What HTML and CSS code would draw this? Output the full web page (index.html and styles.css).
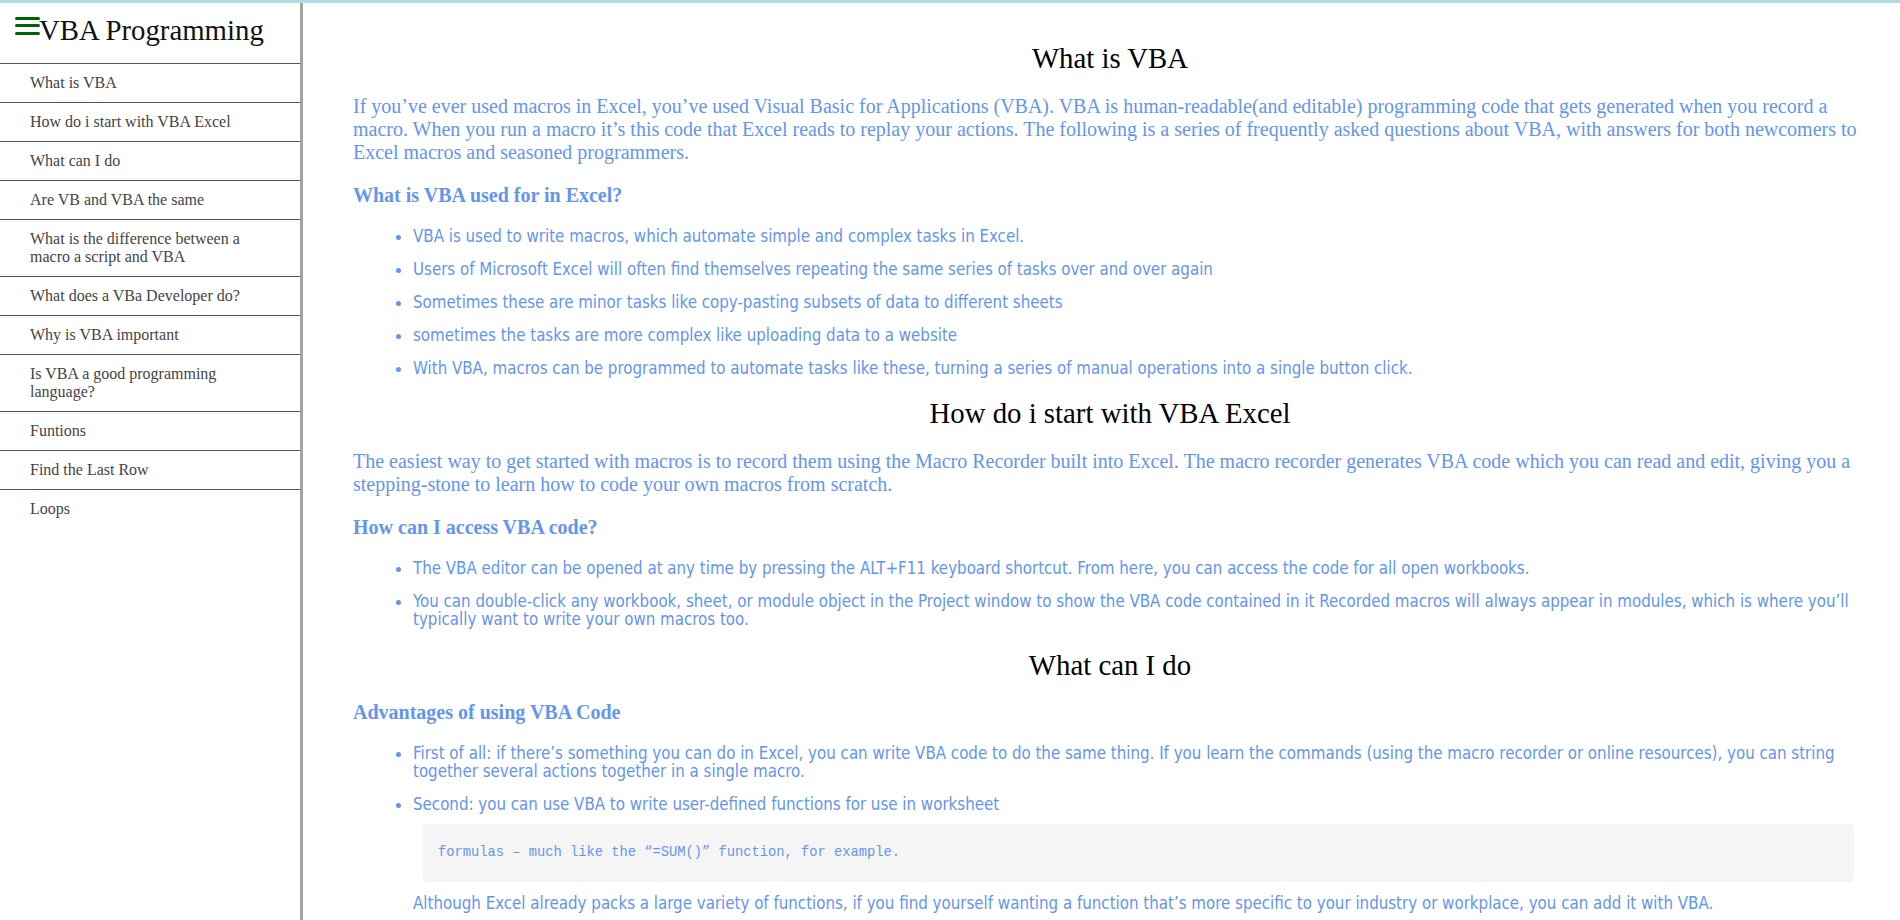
FILE: index.html
```html
<!DOCTYPE html>
<html lang="en">
<head>
<meta charset="utf-8">
<title>VBA Programming</title>
<link rel="stylesheet" href="styles.css">
</head>
<body>
<div class="layout">
  <aside class="sidebar">
    <div class="brand">
      <svg class="menu-icon" width="25" height="24" viewBox="0 0 25 24" aria-hidden="true">
        <rect x="0" y="3" width="25" height="3" rx="1.5" fill="#006400"/>
        <rect x="0" y="10" width="25" height="3" rx="1.5" fill="#006400"/>
        <rect x="0" y="18" width="25" height="3" rx="1.5" fill="#006400"/>
      </svg>
      <h1 class="brand-title">VBA Programming</h1>
    </div>
    <ul class="nav">
      <li><a href="#">What is VBA</a></li>
      <li><a href="#">How do i start with VBA Excel</a></li>
      <li><a href="#">What can I do</a></li>
      <li><a href="#">Are VB and VBA the same</a></li>
      <li><a href="#">What is the difference between a macro a script and VBA</a></li>
      <li><a href="#">What does a VBa Developer do?</a></li>
      <li><a href="#">Why is VBA important</a></li>
      <li><a href="#">Is VBA a good programming language?</a></li>
      <li><a href="#">Funtions</a></li>
      <li><a href="#">Find the Last Row</a></li>
      <li><a href="#">Loops</a></li>
    </ul>
  </aside>
  <main class="content">
    <section>
      <h2 class="section-title">What is VBA</h2>
      <p class="lead">If you’ve ever used macros in Excel, you’ve used Visual Basic for Applications (VBA). VBA is human-readable(and editable) programming code that gets generated when you record a macro. When you run a macro it’s this code that Excel reads to replay your actions. The following is a series of frequently asked questions about VBA, with answers for both newcomers to Excel macros and seasoned programmers.</p>
      <h3 class="sub-title">What is VBA used for in Excel?</h3>
      <ul class="points">
        <li>VBA is used to write macros, which automate simple and complex tasks in Excel.</li>
        <li>Users of Microsoft Excel will often find themselves repeating the same series of tasks over and over again</li>
        <li>Sometimes these are minor tasks like copy-pasting subsets of data to different sheets</li>
        <li>sometimes the tasks are more complex like uploading data to a website</li>
        <li>With VBA, macros can be programmed to automate tasks like these, turning a series of manual operations into a single button click.</li>
      </ul>
    </section>
    <section>
      <h2 class="section-title">How do i start with VBA Excel</h2>
      <p class="lead">The easiest way to get started with macros is to record them using the Macro Recorder built into Excel. The macro recorder generates VBA code which you can read and edit, giving you a stepping-stone to learn how to code your own macros from scratch.</p>
      <h3 class="sub-title">How can I access VBA code?</h3>
      <ul class="points">
        <li>The VBA editor can be opened at any time by pressing the ALT+F11 keyboard shortcut. From here, you can access the code for all open workbooks.</li>
        <li>You can double-click any workbook, sheet, or module object in the Project window to show the VBA code contained in it Recorded macros will always appear in modules, which is where you’ll typically want to write your own macros too.</li>
      </ul>
    </section>
    <section>
      <h2 class="section-title">What can I do</h2>
      <h3 class="sub-title">Advantages of using VBA Code</h3>
      <ul class="points">
        <li>First of all: if there’s something you can do in Excel, you can write VBA code to do the same thing. If you learn the commands (using the macro recorder or online resources), you can string together several actions together in a single macro.</li>
        <li>Second: you can use VBA to write user-defined functions for use in worksheet
          <pre class="code">formulas – much like the “=SUM()” function, for example.</pre>
          <p class="note">Although Excel already packs a large variety of functions, if you find yourself wanting a function that’s more specific to your industry or workplace, you can add it with VBA.</p>
        </li>
      </ul>
    </section>
  </main>
</div>
</body>
</html>
```

FILE: styles.css
```css
* {
  box-sizing: border-box;
}

html,
body {
  margin: 0;
  padding: 0;
}

body {
  font-family: "Liberation Serif", "Times New Roman", serif;
  background: #ffffff;
  border-top: 3px solid #b0dde3;
  color: #000;
}

.layout {
  display: flex;
  min-height: calc(100vh - 3px);
}

.sidebar {
  flex: 0 0 303px;
  width: 303px;
  border-right: 3px solid #a4a49c;
}

.brand {
  display: flex;
  align-items: flex-start;
  height: 60px;
  padding: 11px 0 0 15px;
}

.menu-icon {
  flex: 0 0 auto;
  display: block;
}

.brand-title {
  margin: 0 0 0 -1px;
  font-size: 28.8px;
  line-height: 32px;
  font-weight: normal;
  color: #111;
}

.nav {
  list-style: none;
  margin: 0;
  padding: 0;
}

.nav li {
  border-top: 1px solid #555;
}

.nav a {
  display: block;
  padding: 10px 30px 10px 30px;
  font-size: 16px;
  line-height: 18px;
  color: #444;
  text-decoration: none;
}

.content {
  flex: 1 1 auto;
  min-width: 0;
  padding: 19px 38px 0 50px;
}

.section-title {
  margin: 20px 0;
  padding-left: 5px;
  font-size: 28.8px;
  line-height: 32px;
  font-weight: normal;
  text-align: center;
  color: #000;
}

.lead {
  margin: 21px 0 20px;
  font-size: 20px;
  line-height: 23px;
  color: #6495ed;
}

.sub-title {
  margin: 20px 0;
  font-size: 20px;
  line-height: 23px;
  font-weight: bold;
  color: #6495ed;
}

.points {
  margin: 20px 0;
  padding-left: 60px;
  font-family: "DejaVu Sans Condensed", "DejaVu Sans", sans-serif;
  font-stretch: condensed;
  font-size: 16.75px;
  line-height: 18.5px;
  color: #6495ed;
}

.points li + li {
  margin-top: 14.4px;
}

.code {
  margin: 10px 8px 0 10px;
  padding: 21px 15px;
  background: #f5f5f5;
  border-radius: 4px;
  font-family: "Liberation Mono", "Courier New", monospace;
  font-size: 13.75px;
  line-height: 16px;
  color: #6495ed;
  white-space: pre-wrap;
}

.note {
  margin: 12px 0 0;
  font: inherit;
  color: inherit;
}
```
